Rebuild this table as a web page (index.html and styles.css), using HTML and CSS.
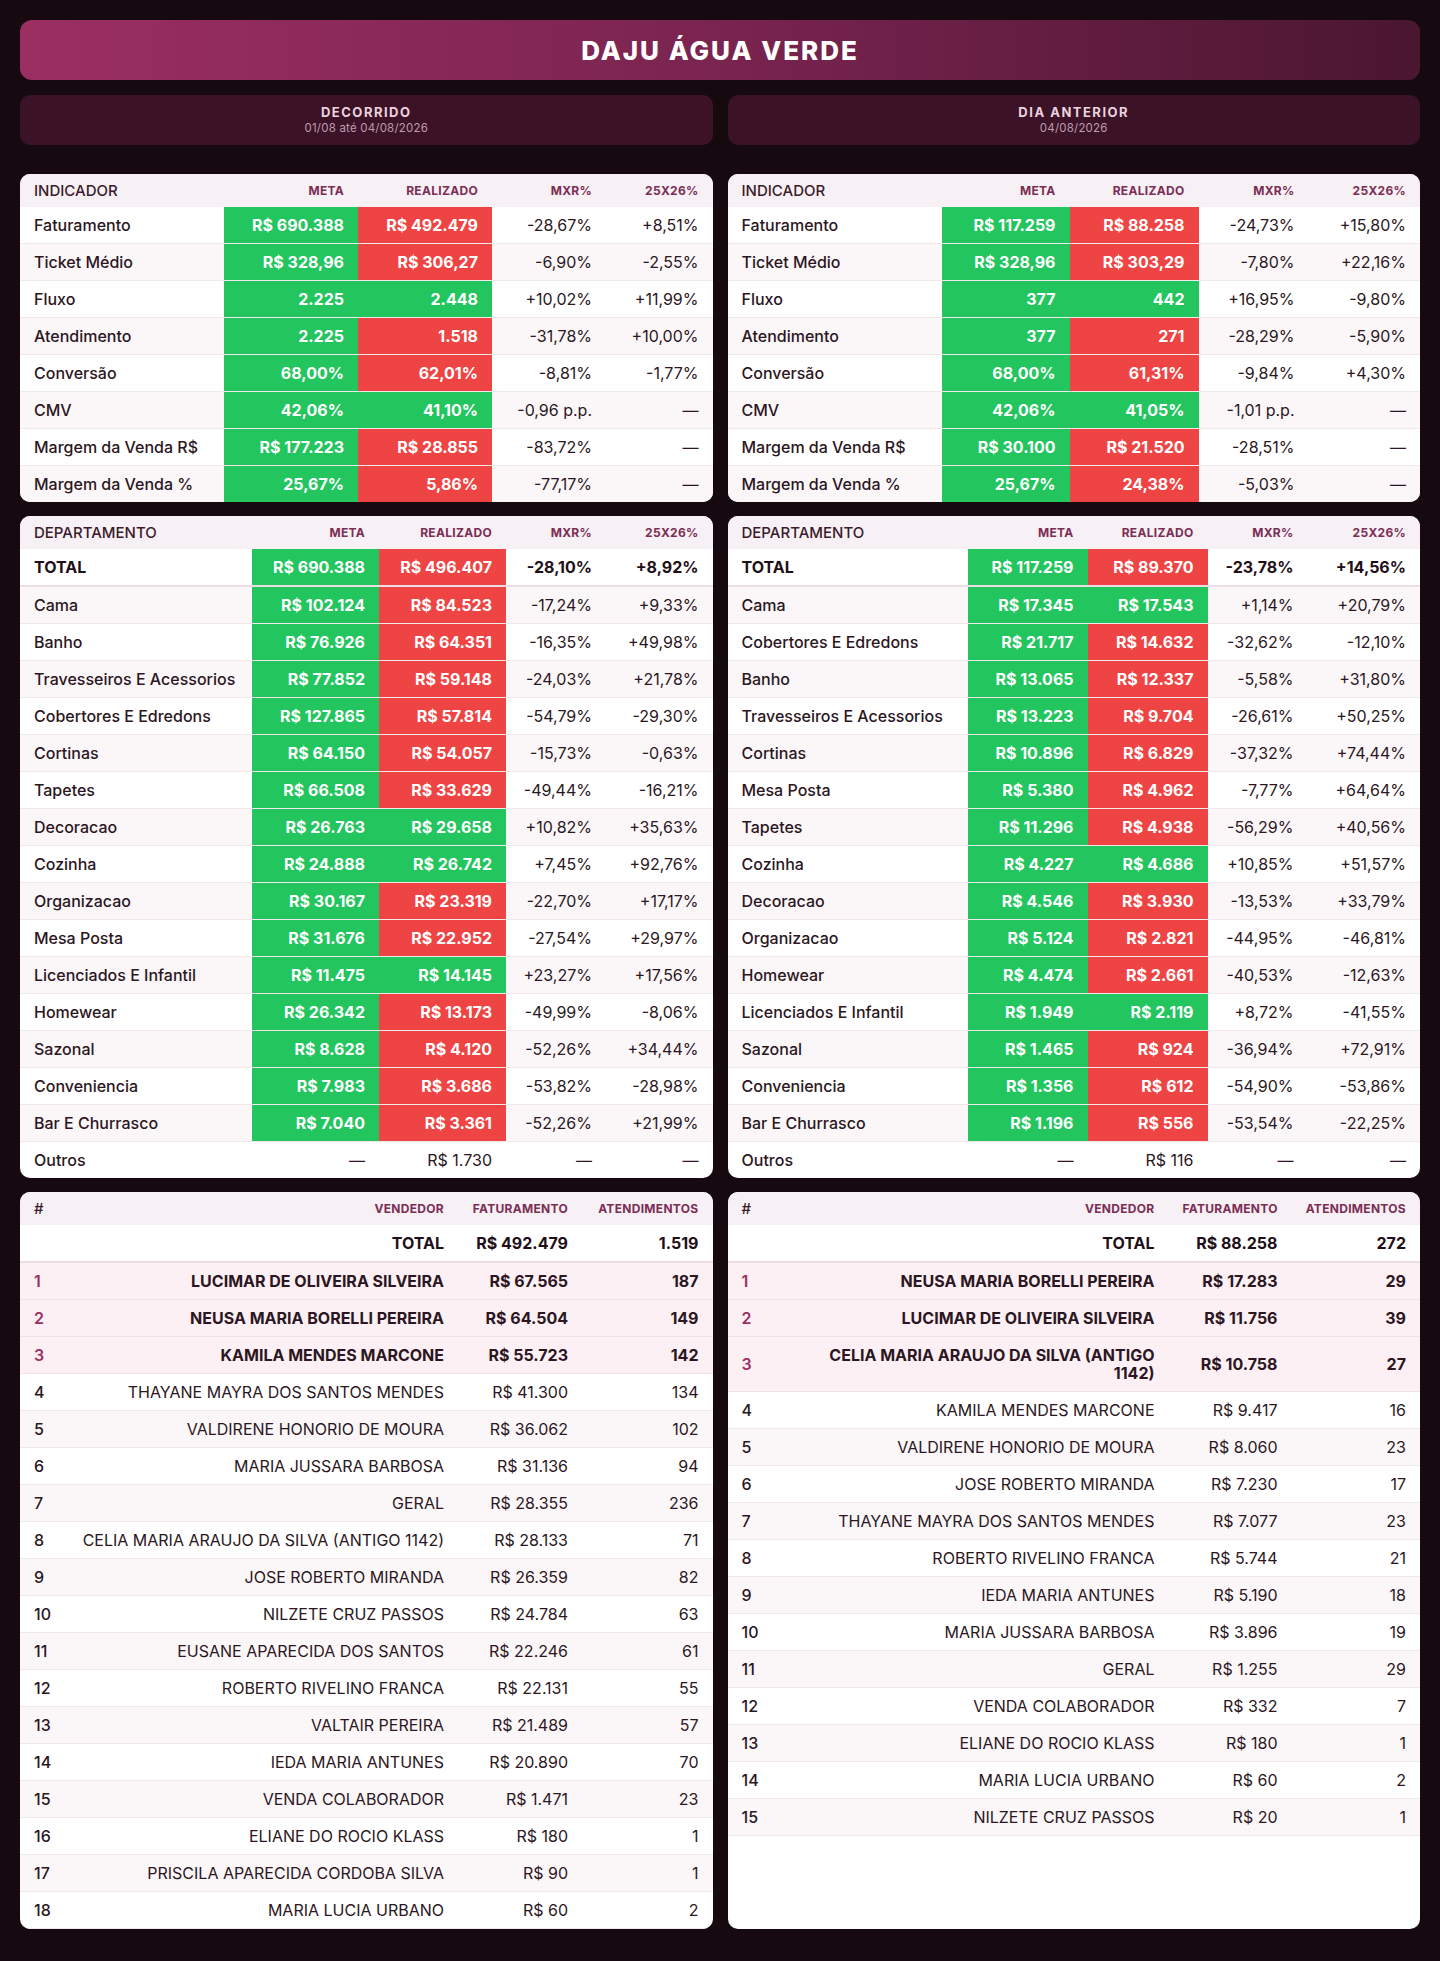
FILE: index.html
```html
<!DOCTYPE html>
<html lang="pt-BR">
<head>
<meta charset="utf-8">
<title>DAJU ÁGUA VERDE</title>
<link rel="stylesheet" href="styles.css">
</head>
<body>
<div class="page">
  <header class="title">DAJU ÁGUA VERDE</header>
  <div class="grid">
    <div class="sub"><div class="sub-t">DECORRIDO</div><div class="sub-d">01/08 até 04/08/2026</div></div>
    <div class="sub"><div class="sub-t">DIA ANTERIOR</div><div class="sub-d">04/08/2026</div></div>

    <div class="card">
      <table class="tbl">
        <colgroup><col class="w204"><col class="w134"><col class="w134"><col class="w114"><col></colgroup>
        <thead><tr><th class="first">INDICADOR</th><th>META</th><th>REALIZADO</th><th>MXR%</th><th>25X26%</th></tr></thead>
        <tbody>
          <tr><td class="lbl">Faturamento</td><td class="g">R$ 690.388</td><td class="r">R$ 492.479</td><td>-28,67%</td><td>+8,51%</td></tr>
          <tr><td class="lbl">Ticket Médio</td><td class="g">R$ 328,96</td><td class="r">R$ 306,27</td><td>-6,90%</td><td>-2,55%</td></tr>
          <tr><td class="lbl">Fluxo</td><td class="g">2.225</td><td class="g">2.448</td><td>+10,02%</td><td>+11,99%</td></tr>
          <tr><td class="lbl">Atendimento</td><td class="g">2.225</td><td class="r">1.518</td><td>-31,78%</td><td>+10,00%</td></tr>
          <tr><td class="lbl">Conversão</td><td class="g">68,00%</td><td class="r">62,01%</td><td>-8,81%</td><td>-1,77%</td></tr>
          <tr><td class="lbl">CMV</td><td class="g">42,06%</td><td class="g">41,10%</td><td>-0,96 p.p.</td><td>—</td></tr>
          <tr><td class="lbl">Margem da Venda R$</td><td class="g">R$ 177.223</td><td class="r">R$ 28.855</td><td>-83,72%</td><td>—</td></tr>
          <tr><td class="lbl">Margem da Venda %</td><td class="g">25,67%</td><td class="r">5,86%</td><td>-77,17%</td><td>—</td></tr>
        </tbody>
      </table>
    </div>

    <div class="card">
      <table class="tbl">
        <colgroup><col class="w214"><col class="w128"><col class="w129"><col class="w110"><col></colgroup>
        <thead><tr><th class="first">INDICADOR</th><th>META</th><th>REALIZADO</th><th>MXR%</th><th>25X26%</th></tr></thead>
        <tbody>
          <tr><td class="lbl">Faturamento</td><td class="g">R$ 117.259</td><td class="r">R$ 88.258</td><td>-24,73%</td><td>+15,80%</td></tr>
          <tr><td class="lbl">Ticket Médio</td><td class="g">R$ 328,96</td><td class="r">R$ 303,29</td><td>-7,80%</td><td>+22,16%</td></tr>
          <tr><td class="lbl">Fluxo</td><td class="g">377</td><td class="g">442</td><td>+16,95%</td><td>-9,80%</td></tr>
          <tr><td class="lbl">Atendimento</td><td class="g">377</td><td class="r">271</td><td>-28,29%</td><td>-5,90%</td></tr>
          <tr><td class="lbl">Conversão</td><td class="g">68,00%</td><td class="r">61,31%</td><td>-9,84%</td><td>+4,30%</td></tr>
          <tr><td class="lbl">CMV</td><td class="g">42,06%</td><td class="g">41,05%</td><td>-1,01 p.p.</td><td>—</td></tr>
          <tr><td class="lbl">Margem da Venda R$</td><td class="g">R$ 30.100</td><td class="r">R$ 21.520</td><td>-28,51%</td><td>—</td></tr>
          <tr><td class="lbl">Margem da Venda %</td><td class="g">25,67%</td><td class="r">24,38%</td><td>-5,03%</td><td>—</td></tr>
        </tbody>
      </table>
    </div>

    <div class="card">
      <table class="tbl">
        <colgroup><col class="w232"><col class="w127"><col class="w127"><col class="w100"><col></colgroup>
        <thead><tr><th class="first">DEPARTAMENTO</th><th>META</th><th>REALIZADO</th><th>MXR%</th><th>25X26%</th></tr></thead>
        <tbody>
          <tr class="tot"><td class="lbl">TOTAL</td><td class="g">R$ 690.388</td><td class="r">R$ 496.407</td><td>-28,10%</td><td>+8,92%</td></tr>
          <tr><td class="lbl">Cama</td><td class="g">R$ 102.124</td><td class="r">R$ 84.523</td><td>-17,24%</td><td>+9,33%</td></tr>
          <tr><td class="lbl">Banho</td><td class="g">R$ 76.926</td><td class="r">R$ 64.351</td><td>-16,35%</td><td>+49,98%</td></tr>
          <tr><td class="lbl">Travesseiros E Acessorios</td><td class="g">R$ 77.852</td><td class="r">R$ 59.148</td><td>-24,03%</td><td>+21,78%</td></tr>
          <tr><td class="lbl">Cobertores E Edredons</td><td class="g">R$ 127.865</td><td class="r">R$ 57.814</td><td>-54,79%</td><td>-29,30%</td></tr>
          <tr><td class="lbl">Cortinas</td><td class="g">R$ 64.150</td><td class="r">R$ 54.057</td><td>-15,73%</td><td>-0,63%</td></tr>
          <tr><td class="lbl">Tapetes</td><td class="g">R$ 66.508</td><td class="r">R$ 33.629</td><td>-49,44%</td><td>-16,21%</td></tr>
          <tr><td class="lbl">Decoracao</td><td class="g">R$ 26.763</td><td class="g">R$ 29.658</td><td>+10,82%</td><td>+35,63%</td></tr>
          <tr><td class="lbl">Cozinha</td><td class="g">R$ 24.888</td><td class="g">R$ 26.742</td><td>+7,45%</td><td>+92,76%</td></tr>
          <tr><td class="lbl">Organizacao</td><td class="g">R$ 30.167</td><td class="r">R$ 23.319</td><td>-22,70%</td><td>+17,17%</td></tr>
          <tr><td class="lbl">Mesa Posta</td><td class="g">R$ 31.676</td><td class="r">R$ 22.952</td><td>-27,54%</td><td>+29,97%</td></tr>
          <tr><td class="lbl">Licenciados E Infantil</td><td class="g">R$ 11.475</td><td class="g">R$ 14.145</td><td>+23,27%</td><td>+17,56%</td></tr>
          <tr><td class="lbl">Homewear</td><td class="g">R$ 26.342</td><td class="r">R$ 13.173</td><td>-49,99%</td><td>-8,06%</td></tr>
          <tr><td class="lbl">Sazonal</td><td class="g">R$ 8.628</td><td class="r">R$ 4.120</td><td>-52,26%</td><td>+34,44%</td></tr>
          <tr><td class="lbl">Conveniencia</td><td class="g">R$ 7.983</td><td class="r">R$ 3.686</td><td>-53,82%</td><td>-28,98%</td></tr>
          <tr><td class="lbl">Bar E Churrasco</td><td class="g">R$ 7.040</td><td class="r">R$ 3.361</td><td>-52,26%</td><td>+21,99%</td></tr>
          <tr><td class="lbl">Outros</td><td>—</td><td>R$ 1.730</td><td>—</td><td>—</td></tr>
        </tbody>
      </table>
    </div>

    <div class="card">
      <table class="tbl">
        <colgroup><col class="w240"><col class="w120"><col class="w120"><col class="w100"><col></colgroup>
        <thead><tr><th class="first">DEPARTAMENTO</th><th>META</th><th>REALIZADO</th><th>MXR%</th><th>25X26%</th></tr></thead>
        <tbody>
          <tr class="tot"><td class="lbl">TOTAL</td><td class="g">R$ 117.259</td><td class="r">R$ 89.370</td><td>-23,78%</td><td>+14,56%</td></tr>
          <tr><td class="lbl">Cama</td><td class="g">R$ 17.345</td><td class="g">R$ 17.543</td><td>+1,14%</td><td>+20,79%</td></tr>
          <tr><td class="lbl">Cobertores E Edredons</td><td class="g">R$ 21.717</td><td class="r">R$ 14.632</td><td>-32,62%</td><td>-12,10%</td></tr>
          <tr><td class="lbl">Banho</td><td class="g">R$ 13.065</td><td class="r">R$ 12.337</td><td>-5,58%</td><td>+31,80%</td></tr>
          <tr><td class="lbl">Travesseiros E Acessorios</td><td class="g">R$ 13.223</td><td class="r">R$ 9.704</td><td>-26,61%</td><td>+50,25%</td></tr>
          <tr><td class="lbl">Cortinas</td><td class="g">R$ 10.896</td><td class="r">R$ 6.829</td><td>-37,32%</td><td>+74,44%</td></tr>
          <tr><td class="lbl">Mesa Posta</td><td class="g">R$ 5.380</td><td class="r">R$ 4.962</td><td>-7,77%</td><td>+64,64%</td></tr>
          <tr><td class="lbl">Tapetes</td><td class="g">R$ 11.296</td><td class="r">R$ 4.938</td><td>-56,29%</td><td>+40,56%</td></tr>
          <tr><td class="lbl">Cozinha</td><td class="g">R$ 4.227</td><td class="g">R$ 4.686</td><td>+10,85%</td><td>+51,57%</td></tr>
          <tr><td class="lbl">Decoracao</td><td class="g">R$ 4.546</td><td class="r">R$ 3.930</td><td>-13,53%</td><td>+33,79%</td></tr>
          <tr><td class="lbl">Organizacao</td><td class="g">R$ 5.124</td><td class="r">R$ 2.821</td><td>-44,95%</td><td>-46,81%</td></tr>
          <tr><td class="lbl">Homewear</td><td class="g">R$ 4.474</td><td class="r">R$ 2.661</td><td>-40,53%</td><td>-12,63%</td></tr>
          <tr><td class="lbl">Licenciados E Infantil</td><td class="g">R$ 1.949</td><td class="g">R$ 2.119</td><td>+8,72%</td><td>-41,55%</td></tr>
          <tr><td class="lbl">Sazonal</td><td class="g">R$ 1.465</td><td class="r">R$ 924</td><td>-36,94%</td><td>+72,91%</td></tr>
          <tr><td class="lbl">Conveniencia</td><td class="g">R$ 1.356</td><td class="r">R$ 612</td><td>-54,90%</td><td>-53,86%</td></tr>
          <tr><td class="lbl">Bar E Churrasco</td><td class="g">R$ 1.196</td><td class="r">R$ 556</td><td>-53,54%</td><td>-22,25%</td></tr>
          <tr><td class="lbl">Outros</td><td>—</td><td>R$ 116</td><td>—</td><td>—</td></tr>
        </tbody>
      </table>
    </div>

    <div class="card">
      <table class="tbl vend">
        <colgroup><col class="w40"><col class="w398"><col class="w124"><col></colgroup>
        <thead><tr><th class="first">#</th><th>VENDEDOR</th><th>FATURAMENTO</th><th>ATENDIMENTOS</th></tr></thead>
        <tbody>
          <tr class="tot"><td class="rk"></td><td>TOTAL</td><td>R$ 492.479</td><td>1.519</td></tr>
          <tr class="top"><td class="rk">1</td><td class="nm">LUCIMAR DE OLIVEIRA SILVEIRA</td><td>R$ 67.565</td><td>187</td></tr>
          <tr class="top"><td class="rk">2</td><td class="nm">NEUSA MARIA BORELLI PEREIRA</td><td>R$ 64.504</td><td>149</td></tr>
          <tr class="top"><td class="rk">3</td><td class="nm">KAMILA MENDES MARCONE</td><td>R$ 55.723</td><td>142</td></tr>
          <tr><td class="rk">4</td><td class="nm">THAYANE MAYRA DOS SANTOS MENDES</td><td>R$ 41.300</td><td>134</td></tr>
          <tr><td class="rk">5</td><td class="nm">VALDIRENE HONORIO DE MOURA</td><td>R$ 36.062</td><td>102</td></tr>
          <tr><td class="rk">6</td><td class="nm">MARIA JUSSARA BARBOSA</td><td>R$ 31.136</td><td>94</td></tr>
          <tr><td class="rk">7</td><td class="nm">GERAL</td><td>R$ 28.355</td><td>236</td></tr>
          <tr><td class="rk">8</td><td class="nm">CELIA MARIA ARAUJO DA SILVA (ANTIGO 1142)</td><td>R$ 28.133</td><td>71</td></tr>
          <tr><td class="rk">9</td><td class="nm">JOSE ROBERTO MIRANDA</td><td>R$ 26.359</td><td>82</td></tr>
          <tr><td class="rk">10</td><td class="nm">NILZETE CRUZ PASSOS</td><td>R$ 24.784</td><td>63</td></tr>
          <tr><td class="rk">11</td><td class="nm">EUSANE APARECIDA DOS SANTOS</td><td>R$ 22.246</td><td>61</td></tr>
          <tr><td class="rk">12</td><td class="nm">ROBERTO RIVELINO FRANCA</td><td>R$ 22.131</td><td>55</td></tr>
          <tr><td class="rk">13</td><td class="nm">VALTAIR PEREIRA</td><td>R$ 21.489</td><td>57</td></tr>
          <tr><td class="rk">14</td><td class="nm">IEDA MARIA ANTUNES</td><td>R$ 20.890</td><td>70</td></tr>
          <tr><td class="rk">15</td><td class="nm">VENDA COLABORADOR</td><td>R$ 1.471</td><td>23</td></tr>
          <tr><td class="rk">16</td><td class="nm">ELIANE DO ROCIO KLASS</td><td>R$ 180</td><td>1</td></tr>
          <tr><td class="rk">17</td><td class="nm">PRISCILA APARECIDA CORDOBA SILVA</td><td>R$ 90</td><td>1</td></tr>
          <tr><td class="rk">18</td><td class="nm">MARIA LUCIA URBANO</td><td>R$ 60</td><td>2</td></tr>
        </tbody>
      </table>
    </div>

    <div class="card">
      <table class="tbl vend">
        <colgroup><col class="w74"><col class="w367"><col class="w123"><col></colgroup>
        <thead><tr><th class="first">#</th><th>VENDEDOR</th><th>FATURAMENTO</th><th>ATENDIMENTOS</th></tr></thead>
        <tbody>
          <tr class="tot"><td class="rk"></td><td>TOTAL</td><td>R$ 88.258</td><td>272</td></tr>
          <tr class="top"><td class="rk">1</td><td class="nm">NEUSA MARIA BORELLI PEREIRA</td><td>R$ 17.283</td><td>29</td></tr>
          <tr class="top"><td class="rk">2</td><td class="nm">LUCIMAR DE OLIVEIRA SILVEIRA</td><td>R$ 11.756</td><td>39</td></tr>
          <tr class="top"><td class="rk">3</td><td class="nm">CELIA MARIA ARAUJO DA SILVA (ANTIGO 1142)</td><td>R$ 10.758</td><td>27</td></tr>
          <tr><td class="rk">4</td><td class="nm">KAMILA MENDES MARCONE</td><td>R$ 9.417</td><td>16</td></tr>
          <tr><td class="rk">5</td><td class="nm">VALDIRENE HONORIO DE MOURA</td><td>R$ 8.060</td><td>23</td></tr>
          <tr><td class="rk">6</td><td class="nm">JOSE ROBERTO MIRANDA</td><td>R$ 7.230</td><td>17</td></tr>
          <tr><td class="rk">7</td><td class="nm">THAYANE MAYRA DOS SANTOS MENDES</td><td>R$ 7.077</td><td>23</td></tr>
          <tr><td class="rk">8</td><td class="nm">ROBERTO RIVELINO FRANCA</td><td>R$ 5.744</td><td>21</td></tr>
          <tr><td class="rk">9</td><td class="nm">IEDA MARIA ANTUNES</td><td>R$ 5.190</td><td>18</td></tr>
          <tr><td class="rk">10</td><td class="nm">MARIA JUSSARA BARBOSA</td><td>R$ 3.896</td><td>19</td></tr>
          <tr><td class="rk">11</td><td class="nm">GERAL</td><td>R$ 1.255</td><td>29</td></tr>
          <tr><td class="rk">12</td><td class="nm">VENDA COLABORADOR</td><td>R$ 332</td><td>7</td></tr>
          <tr><td class="rk">13</td><td class="nm">ELIANE DO ROCIO KLASS</td><td>R$ 180</td><td>1</td></tr>
          <tr><td class="rk">14</td><td class="nm">MARIA LUCIA URBANO</td><td>R$ 60</td><td>2</td></tr>
          <tr><td class="rk">15</td><td class="nm">NILZETE CRUZ PASSOS</td><td>R$ 20</td><td>1</td></tr>
        </tbody>
      </table>
    </div>
  </div>
</div>
</body>
</html>
```

FILE: styles.css
```css
html, body {
  margin: 0;
  padding: 0;
  background: #160a10;
}
body {
  font-family: Inter, "Noto Sans", "Liberation Sans", sans-serif;
  color: #2b1622;
}
.page {
  padding: 20px;
}
.title {
  height: 60px;
  line-height: 62px;
  border-radius: 12px;
  background: linear-gradient(90deg, #9b2f61 0%, #7a2450 50%, #4a1630 100%);
  color: #ffffff;
  text-align: center;
  font-size: 26px;
  font-weight: 800;
  letter-spacing: 2px;
  margin-bottom: 15px;
}
.grid {
  display: grid;
  grid-template-columns: 1fr 1fr;
  column-gap: 15px;
  row-gap: 14px;
}
.sub {
  background: #3b1226;
  border-radius: 10px;
  padding: 9px 0;
  text-align: center;
  margin-bottom: 15px;
}
.sub-t {
  font-size: 13px;
  line-height: 16px;
  font-weight: 700;
  letter-spacing: 1.5px;
  color: #ecd3df;
}
.sub-d {
  font-size: 11.5px;
  line-height: 16px;
  color: #bf9cae;
  letter-spacing: 0.2px;
}
.card {
  background: #ffffff;
  border-radius: 10px;
  overflow: hidden;
}
.tbl {
  width: 100%;
  border-collapse: separate;
  border-spacing: 0;
  table-layout: fixed;
  font-size: 16px;
  line-height: 18px;
}
.w40 { width: 40px; }
.w74 { width: 74px; }
.w100 { width: 100px; }
.w110 { width: 110px; }
.w114 { width: 114px; }
.w120 { width: 120px; }
.w123 { width: 123px; }
.w124 { width: 124px; }
.w127 { width: 127px; }
.w128 { width: 128px; }
.w129 { width: 129px; }
.w134 { width: 134px; }
.w204 { width: 204px; }
.w214 { width: 214px; }
.w232 { width: 232px; }
.w240 { width: 240px; }
.w367 { width: 367px; }
.w398 { width: 398px; }

.tbl th {
  background: #f7f0f4;
  padding: 9px 14px;
  font-size: 12px;
  line-height: 15px;
  font-weight: 700;
  color: #7b2e55;
  letter-spacing: 0.3px;
  text-align: right;
  white-space: nowrap;
}
.tbl th.first {
  text-align: left;
  font-size: 15px;
  font-weight: 500;
  color: #3a1a2b;
  letter-spacing: 0;
}
.tbl td {
  padding: 9px 14px;
  border-bottom: 1px solid #f1e8ec;
  text-align: right;
  white-space: nowrap;
  color: #2b1622;
}
.tbl tbody tr:nth-child(even) td {
  background: #fbf7f9;
}
.tbl tbody tr:last-child td {
  border-bottom: none;
}
.tbl.vend tbody tr:last-child td {
  border-bottom: 1px solid #f1e8ec;
}
.tbl td.lbl {
  text-align: left;
  font-weight: 500;
}
.tbl tbody tr td.g {
  background: #22c55e;
  color: #ffffff;
  font-weight: 700;
}
.tbl tbody tr td.r {
  background: #ef4444;
  color: #ffffff;
  font-weight: 700;
}
.tbl tbody tr.tot td {
  font-weight: 700;
  border-bottom: 2px solid #ecdde4;
  color: #1f0f18;
}
.tbl tbody tr.tot td.g,
.tbl tbody tr.tot td.r {
  color: #ffffff;
}
.tbl td.rk {
  text-align: left;
  font-weight: 500;
}
.tbl td.nm {
  white-space: normal;
}
.tbl tbody tr.top td {
  background: #fcf0f5;
  font-weight: 700;
  border-bottom-color: #f5e0e9;
}
.tbl tbody tr.top td.rk {
  color: #9b3060;
  font-weight: 600;
}
```
